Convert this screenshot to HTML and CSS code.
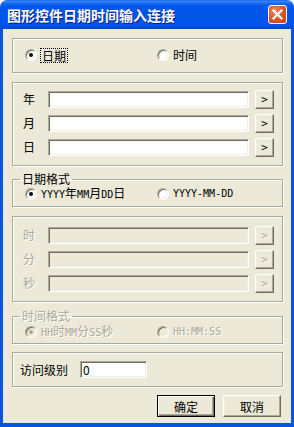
FILE: index.html
```html
<!DOCTYPE html>
<html lang="zh-CN">
<head>
    <meta charset="UTF-8">
    <title>图形控件日期时间输入连接</title>
    <link rel="stylesheet" href="styles.css">
</head>
<body>
    <div class="window">
        <div class="titlebar">
            <span class="title">图形控件日期时间输入连接</span>
            <span class="close">
                <svg width="19" height="19" viewBox="0 0 19 19">
                    <path d="M5.5 5.5 L13.5 13.5 M13.5 5.5 L5.5 13.5" stroke="#fff" stroke-width="2.2" stroke-linecap="square"/>
                </svg>
            </span>
        </div>
        <div class="client">
            <fieldset class="group g-mode">
                <div class="radios">
                    <label class="opt"><span class="radio on"></span><span class="focus">日期</span></label>
                    <label class="opt"><span class="radio"></span><span class="txt">时间</span></label>
                </div>
            </fieldset>

            <fieldset class="group g-fields">
                <div class="field"><span class="lbl">年</span><span class="edit"></span><span class="btn arrow">&gt;</span></div>
                <div class="field"><span class="lbl">月</span><span class="edit"></span><span class="btn arrow">&gt;</span></div>
                <div class="field"><span class="lbl">日</span><span class="edit"></span><span class="btn arrow">&gt;</span></div>
            </fieldset>

            <fieldset class="group g-fmt">
                <legend>日期格式</legend>
                <div class="radios">
                    <label class="opt"><span class="radio on"></span><span class="txt"><span class="mono">YYYY</span>年<span class="mono">MM</span>月<span class="mono">DD</span>日</span></label>
                    <label class="opt"><span class="radio"></span><span class="txt mono">YYYY-MM-DD</span></label>
                </div>
            </fieldset>

            <fieldset class="group g-fields g-time disabled">
                <div class="field"><span class="lbl">时</span><span class="edit"></span><span class="btn arrow">&gt;</span></div>
                <div class="field"><span class="lbl">分</span><span class="edit"></span><span class="btn arrow">&gt;</span></div>
                <div class="field"><span class="lbl">秒</span><span class="edit"></span><span class="btn arrow">&gt;</span></div>
            </fieldset>

            <fieldset class="group g-fmt g-tfmt disabled">
                <legend>时间格式</legend>
                <div class="radios">
                    <label class="opt"><span class="radio on"></span><span class="txt"><span class="mono">HH</span>时<span class="mono">MM</span>分<span class="mono">SS</span>秒</span></label>
                    <label class="opt"><span class="radio"></span><span class="txt mono">HH:MM:SS</span></label>
                </div>
            </fieldset>

            <fieldset class="group g-level">
                <div class="level">
                    <span class="lbl">访问级别</span>
                    <span class="edit small">0</span>
                </div>
            </fieldset>

            <div class="actions">
                <span class="btn push default">确定</span>
                <span class="btn push">取消</span>
            </div>
        </div>
    </div>
</body>
</html>
```

FILE: styles.css
```css
body {
    margin: 0;
    background-color: #fff;
    font-family: "Noto Sans CJK SC", "Liberation Sans", sans-serif;
    font-size: 12px;
    color: #000;
}

.window {
    width: 294px;
    height: 427px;
    display: flex;
    flex-direction: column;
}

/* Title bar */
.titlebar {
    height: 29px;
    flex: none;
    display: flex;
    align-items: center;
    justify-content: space-between;
    padding: 0 7px 0 7px;
    border-radius: 7px 7px 0 0;
    background: linear-gradient(#0a52d8 0, #3f8cf3 1px, #1a6ef5 3px, #0058ee 6px, #0054e6 50%, #0056ec 80%, #0046d2 100%);
}

.title {
    color: #fff;
    font-size: 14px;
    font-weight: 700;
    line-height: 16px;
    text-shadow: 1px 1px #0a1c7a;
}

.close {
    width: 19px;
    height: 19px;
    box-sizing: border-box;
    border: 1px solid #fff;
    border-radius: 3px;
    background: radial-gradient(circle at 35% 30%, #f08b6c 0, #e0592f 45%, #c83b14 100%);
    display: flex;
    align-items: center;
    justify-content: center;
}

.close svg {
    display: block;
    margin: -1px;
}

/* Client area */
.client {
    flex: 1;
    background-color: #ece9d8;
    border-style: solid;
    border-color: #0856e0;
    border-width: 0 3px 4px 3px;
    display: flex;
    flex-direction: column;
}

.group {
    margin: 0 0 0 9px;
    padding: 0;
    width: 271px;
    box-sizing: border-box;
    min-inline-size: 0;
    border: 1px solid #aca899;
    box-shadow: inset 1px 1px #fff, 1px 1px #fff;
}

.group legend {
    padding: 0 2px;
    margin-left: 7px;
    line-height: 14px;
}

.g-mode {
    margin-top: 9px;
    height: 35px;
    padding-top: 8px;
}

.g-fields {
    margin-top: 9px;
    height: 84px;
    padding-top: 7px;
}

.g-fmt {
    margin-top: 6px;
    height: 35px;
}

.g-time {
    margin-top: 9px;
    height: 86px;
    padding-top: 9px;
}

.g-tfmt {
    margin-top: 7px;
}

.g-tfmt .radios {
    padding-top: 1px;
}

.g-level {
    margin-top: 8px;
    height: 35px;
    padding-top: 8px;
}

/* Radio rows */
.radios {
    display: grid;
    grid-template-columns: 132px 1fr;
    padding-left: 12px;
}

.opt {
    display: flex;
    align-items: center;
    height: 16px;
}

.radio {
    width: 12px;
    height: 12px;
    flex: none;
    box-sizing: border-box;
    border-radius: 50%;
    border: 1px solid;
    border-color: #aca899 #fff #fff #aca899;
    box-shadow: inset 1px 1px #716f64, inset -1px -1px #f1efe2;
    background-color: #fff;
    display: flex;
    align-items: center;
    justify-content: center;
    margin-right: 4px;
}

.radio.on::after {
    content: "";
    width: 4px;
    height: 4px;
    border-radius: 50%;
    background-color: #000;
}

.txt {
    line-height: 14px;
}

.focus {
    border: 1px dotted #000;
    padding: 0 1px;
    line-height: 13px;
    margin-left: -1px;
}

.mono {
    font-family: "DejaVu Sans Mono", monospace;
    font-size: 10px;
}

/* Edit fields */
.field {
    display: flex;
    align-items: center;
    height: 18px;
    margin-bottom: 6px;
    padding-left: 10px;
}

.lbl {
    width: 12px;
    margin-right: 13px;
    line-height: 14px;
}

.edit {
    width: 201px;
    height: 17px;
    box-sizing: border-box;
    border: 1px solid;
    border-color: #aca899 #fff #fff #aca899;
    box-shadow: inset 1px 1px #716f64, inset -1px -1px #f1efe2;
    background-color: #fff;
    margin-right: 6px;
}

.btn {
    box-sizing: border-box;
    border: 1px solid;
    border-color: #fff #716f64 #716f64 #fff;
    box-shadow: inset -1px -1px #aca899, inset 1px 1px #f1efe2;
    background-color: #ece9d8;
    display: flex;
    align-items: center;
    justify-content: center;
}

.arrow {
    width: 19px;
    height: 19px;
    font-family: "DejaVu Sans Mono", monospace;
    font-size: 11px;
}

/* Disabled groups */
.disabled,
.disabled legend {
    color: #aca899;
    text-shadow: 1px 1px #fff;
}

.disabled .edit {
    background-color: #ece9d8;
}

.disabled .radio {
    background-color: #ece9d8;
}

.disabled .radio.on::after {
    background-color: #aca899;
}

/* Access level */
.level {
    display: flex;
    align-items: center;
    padding-left: 7px;
}

.level .lbl {
    width: auto;
    margin-right: 12px;
}

.edit.small {
    width: 67px;
    padding-left: 2px;
    line-height: 15px;
}

/* Dialog buttons */
.actions {
    display: flex;
    justify-content: flex-end;
    gap: 8px;
    margin-top: 8px;
    padding-right: 10px;
}

.push {
    width: 58px;
    height: 22px;
}

.push.default {
    border: 1px solid #000;
    box-shadow: inset 1px 1px #fff, inset -1px -1px #716f64, inset -2px -2px #aca899;
}
```
